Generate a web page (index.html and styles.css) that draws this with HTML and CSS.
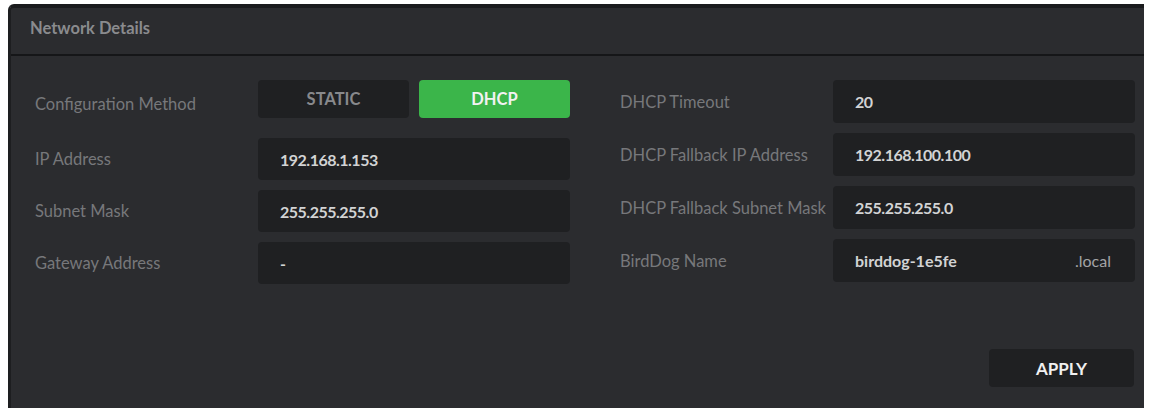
FILE: index.html
```html
<!DOCTYPE html>
<html>
<head>
<meta charset="utf-8">
<link rel="stylesheet" href="styles.css">
</head>
<body>
<div class="panel">
  <div class="header">Network Details</div>
  <div class="content">
    <div class="col col-left">
      <div class="row row-config">
        <div class="label">Configuration Method</div>
        <div class="toggle">
          <div class="tbtn">STATIC</div>
          <div class="tbtn active">DHCP</div>
        </div>
      </div>
      <div class="row">
        <div class="label">IP Address</div>
        <div class="field num">192.168.1.153</div>
      </div>
      <div class="row">
        <div class="label">Subnet Mask</div>
        <div class="field num">255.255.255.0</div>
      </div>
      <div class="row">
        <div class="label">Gateway Address</div>
        <div class="field">-</div>
      </div>
    </div>
    <div class="col col-right">
      <div class="row">
        <div class="label">DHCP Timeout</div>
        <div class="field num">20</div>
      </div>
      <div class="row">
        <div class="label">DHCP Fallback IP Address</div>
        <div class="field num">192.168.100.100</div>
      </div>
      <div class="row">
        <div class="label">DHCP Fallback Subnet Mask</div>
        <div class="field num">255.255.255.0</div>
      </div>
      <div class="row">
        <div class="label">BirdDog Name</div>
        <div class="field field-suffix"><span>birddog-1e5fe</span><span class="suffix">.local</span></div>
      </div>
    </div>
  </div>
  <div class="footer">
    <div class="apply">APPLY</div>
  </div>
</div>
</body>
</html>
```
FILE: styles.css
```css
html, body {
  background: #ffffff;
}
body {
  margin: 4px 5px 0 8px;
  font-family: Lato, "Noto Sans", sans-serif;
}
.panel {
  height: 404px;
  box-sizing: border-box;
  background: #2b2c2f;
  border-top: 4px solid #1a1b1d;
  border-left: 3px solid #1d1e20;
  border-radius: 6px 0 0 0;
  display: flex;
  flex-direction: column;
}
.header {
  height: 48px;
  box-sizing: border-box;
  padding: 0 0 6px 19px;
  display: flex;
  align-items: center;
  font-size: 16.5px;
  font-weight: 700;
  color: #8a8b8e;
  border-bottom: 2px solid #151618;
}
.content {
  display: flex;
  padding: 24px 0 0 24px;
  gap: 50px;
}
.col {
  display: flex;
  flex-direction: column;
  gap: 10px;
}
.row {
  display: flex;
  align-items: center;
}
.label {
  font-size: 16.5px;
  color: #77787b;
  white-space: nowrap;
}
.col-left .label {
  width: 223px;
}
.col-right .label {
  width: 213px;
}
.row-config {
  height: 48px;
}
.toggle {
  display: flex;
  gap: 10px;
  align-self: flex-start;
}
.tbtn {
  width: 151px;
  height: 38px;
  border-radius: 4px;
  background: #1f2022;
  color: #88898c;
  font-size: 16.5px;
  font-weight: 700;
  display: flex;
  align-items: center;
  justify-content: center;
}
.tbtn.active {
  background: #3bb54a;
  color: #f2f2f2;
}
.field {
  height: 42px;
  box-sizing: border-box;
  border-radius: 4px;
  background: #1f2022;
  color: #d2d3d4;
  font-size: 16px;
  font-weight: 700;
  display: flex;
  align-items: center;
  padding-left: 22px;
}
.field.num {
  letter-spacing: -0.5px;
}
.col-left .field {
  width: 312px;
}
.col-right .field {
  width: 302px;
  height: 43px;
}
.field-suffix {
  justify-content: space-between;
  padding-right: 24px;
}
.suffix {
  font-weight: 400;
  color: #a3a4a6;
}
.footer {
  margin-top: auto;
  display: flex;
  justify-content: flex-end;
  padding: 0 10px 21px 0;
}
.apply {
  width: 145px;
  height: 38px;
  border-radius: 4px;
  background: #1f2022;
  color: #f0f0f0;
  font-size: 17px;
  font-weight: 700;
  display: flex;
  align-items: center;
  justify-content: center;
}
```
